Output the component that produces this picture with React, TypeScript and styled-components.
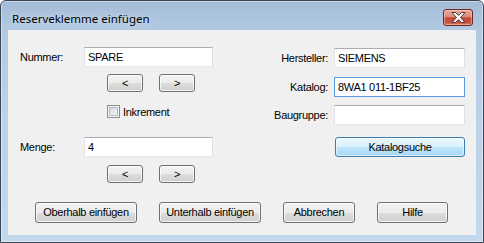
import React from "react";
import styled, { createGlobalStyle, css } from "styled-components";

const Global = createGlobalStyle`
  html, body { margin: 0; padding: 0; background: #ffffff; }
  body { width: 484px; height: 243px; overflow: hidden; }
`;

const Window = styled.div`
  box-sizing: border-box;
  width: 484px;
  height: 243px;
  display: flex;
  flex-direction: column;
  border: 1px solid #3a4654;
  border-radius: 6px 6px 0 0;
  background: linear-gradient(to bottom, #a3bcd8 0px, #b2c9e2 28px, #bcd2ea 50%, #c2d8ee 100%);
  box-shadow: inset 0 0 0 1px rgba(255, 255, 255, 0.45);
  font-family: "Liberation Sans", Arial, sans-serif;
  font-size: 11px;
  letter-spacing: -0.3px;
  color: #000;
`;

const TitleBar = styled.div`
  height: 29px;
  box-sizing: border-box;
  padding: 5px 10px 0 11px;
  display: flex;
  align-items: center;
  justify-content: space-between;
`;

const Title = styled.span`
  font-family: "Noto Sans", "Open Sans", sans-serif;
  font-size: 11.5px;
  letter-spacing: 0;
  color: #000;
  text-shadow: 0 0 6px rgba(255, 255, 255, 0.8);
`;

const CloseButton = styled.div`
  box-sizing: border-box;
  width: 30px;
  height: 17px;
  margin-top: -1px;
  border: 1px solid #6b2a22;
  border-radius: 3px;
  background: linear-gradient(
    to bottom,
    #e6aa9d 0%,
    #d98b7c 45%,
    #c5493a 52%,
    #c3503e 80%,
    #dc7a5c 100%
  );
  box-shadow: inset 0 0 0 1px rgba(255, 220, 210, 0.45);
  display: flex;
  align-items: center;
  justify-content: center;
`;

const Client = styled.div`
  flex: 1;
  margin: 0 7px 7px 7px;
  background: #f0f0f0;
  padding: 17px 0 0 12px;
  display: flex;
  flex-direction: column;
`;

const TopSection = styled.div`
  display: flex;
`;

const LeftCol = styled.div`
  width: 193px;
  display: flex;
  flex-direction: column;
`;

const RightCol = styled.div`
  display: flex;
  flex-direction: column;
`;

const FieldRow = styled.div<{ $mt?: number }>`
  display: flex;
  align-items: center;
  height: 20px;
  margin-top: ${(p) => p.$mt ?? 0}px;
`;

const Label = styled.span`
  width: 64px;
  flex: none;
`;

const RightRow = styled.div<{ $mt?: number }>`
  display: grid;
  grid-template-columns: 115px 131px;
  column-gap: 6px;
  align-items: center;
  height: 20px;
  margin-top: ${(p) => p.$mt ?? 0}px;
`;

const RightLabel = styled.span`
  text-align: right;
`;

const TextBox = styled.input<{ $w: number; $focused?: boolean }>`
  box-sizing: border-box;
  width: ${(p) => p.$w}px;
  height: 20px;
  margin: 0;
  padding: 0 3px;
  border: 1px solid;
  border-color: #abadb3 #dbdfe6 #e3e9ef #e2e3ea;
  background: #ffffff;
  font-family: "Liberation Sans", Arial, sans-serif;
  font-size: 11px;
  letter-spacing: -0.3px;
  color: #000;
  outline: none;
  ${(p) =>
    p.$focused &&
    css`
      border-color: #569de5;
    `}
`;

const ArrowRow = styled.div<{ $mt?: number }>`
  display: flex;
  gap: 16px;
  padding-left: 87px;
  margin-top: ${(p) => p.$mt ?? 0}px;
`;

const Button = styled.button<{ $w: number; $h: number; $primary?: boolean; $ml?: number }>`
  box-sizing: border-box;
  width: ${(p) => p.$w}px;
  height: ${(p) => p.$h}px;
  margin: 0 0 0 ${(p) => p.$ml ?? 0}px;
  padding: 0;
  border: 1px solid #707070;
  border-radius: 3px;
  background: linear-gradient(to bottom, #f2f2f2 0%, #ebebeb 50%, #dddddd 51%, #cfcfcf 100%);
  box-shadow: inset 0 0 0 1px rgba(255, 255, 255, 0.75);
  font-family: "Liberation Sans", Arial, sans-serif;
  font-size: 11px;
  letter-spacing: -0.3px;
  color: #000;
  line-height: 1;
  display: flex;
  align-items: center;
  justify-content: center;
  ${(p) =>
    p.$primary &&
    css`
      border-color: #3c7fb1;
      background: linear-gradient(to bottom, #eaf6fd 0%, #d9f0fc 50%, #bee6fd 51%, #a7d9f5 100%);
      box-shadow: inset 0 0 0 1px rgba(255, 255, 255, 0.6);
    `}
`;

const CheckRow = styled.label<{ $mt?: number }>`
  display: flex;
  align-items: center;
  gap: 3px;
  height: 13px;
  padding-left: 87px;
  margin-top: ${(p) => p.$mt ?? 0}px;
`;

const CheckBox = styled.span`
  box-sizing: border-box;
  width: 13px;
  height: 13px;
  flex: none;
  border: 1px solid #8e8f8f;
  background: linear-gradient(135deg, #cdd1d6 0%, #e6e8ea 55%, #f8f8f8 100%);
  box-shadow: inset 0 0 0 1px #f4f4f4, inset 0 0 0 2px #b9bcc0;
`;

const BottomRow = styled.div`
  display: flex;
  gap: 22px;
  margin-top: 19px;
  padding-left: 15px;
`;

const CloseGlyph = () => (
  <svg width="15" height="11" viewBox="0 0 15 11">
    <polygon
      points="1,0.5 4.5,0.5 7.5,3.5 10.5,0.5 14,0.5 9.5,5.5 14,10.5 10.5,10.5 7.5,7.5 4.5,10.5 1,10.5 5.5,5.5"
      fill="#ffffff"
      stroke="#4a3a38"
      strokeWidth="1"
      strokeLinejoin="round"
    />
  </svg>
);

export default function App() {
  return (
    <>
      <Global />
      <Window>
        <TitleBar>
          <Title>Reserveklemme einfügen</Title>
          <CloseButton>
            <CloseGlyph />
          </CloseButton>
        </TitleBar>
        <Client>
          <TopSection>
            <LeftCol>
              <FieldRow>
                <Label>Nummer:</Label>
                <TextBox $w={129} readOnly value="SPARE" />
              </FieldRow>
              <ArrowRow $mt={7}>
                <Button $w={36} $h={18}>&lt;</Button>
                <Button $w={36} $h={18}>&gt;</Button>
              </ArrowRow>
              <CheckRow $mt={13}>
                <CheckBox />
                <span>Inkrement</span>
              </CheckRow>
              <FieldRow $mt={19}>
                <Label>Menge:</Label>
                <TextBox $w={129} readOnly value="4" />
              </FieldRow>
              <ArrowRow $mt={8}>
                <Button $w={36} $h={18}>&lt;</Button>
                <Button $w={36} $h={18}>&gt;</Button>
              </ArrowRow>
            </LeftCol>
            <RightCol>
              <RightRow $mt={1}>
                <RightLabel>Hersteller:</RightLabel>
                <TextBox $w={131} readOnly value="SIEMENS" />
              </RightRow>
              <RightRow $mt={9}>
                <RightLabel>Katalog:</RightLabel>
                <TextBox $w={131} $focused readOnly value="8WA1 011-1BF25" />
              </RightRow>
              <RightRow $mt={8}>
                <RightLabel>Baugruppe:</RightLabel>
                <TextBox $w={131} readOnly value="" />
              </RightRow>
              <RightRow $mt={12}>
                <span />
                <Button $w={130} $h={20} $ml={1} $primary>
                  Katalogsuche
                </Button>
              </RightRow>
            </RightCol>
          </TopSection>
          <BottomRow>
            <Button $w={102} $h={21}>Oberhalb einfügen</Button>
            <Button $w={102} $h={21}>Unterhalb einfügen</Button>
            <Button $w={72} $h={21}>Abbrechen</Button>
            <Button $w={71} $h={21}>Hilfe</Button>
          </BottomRow>
        </Client>
      </Window>
    </>
  );
}
